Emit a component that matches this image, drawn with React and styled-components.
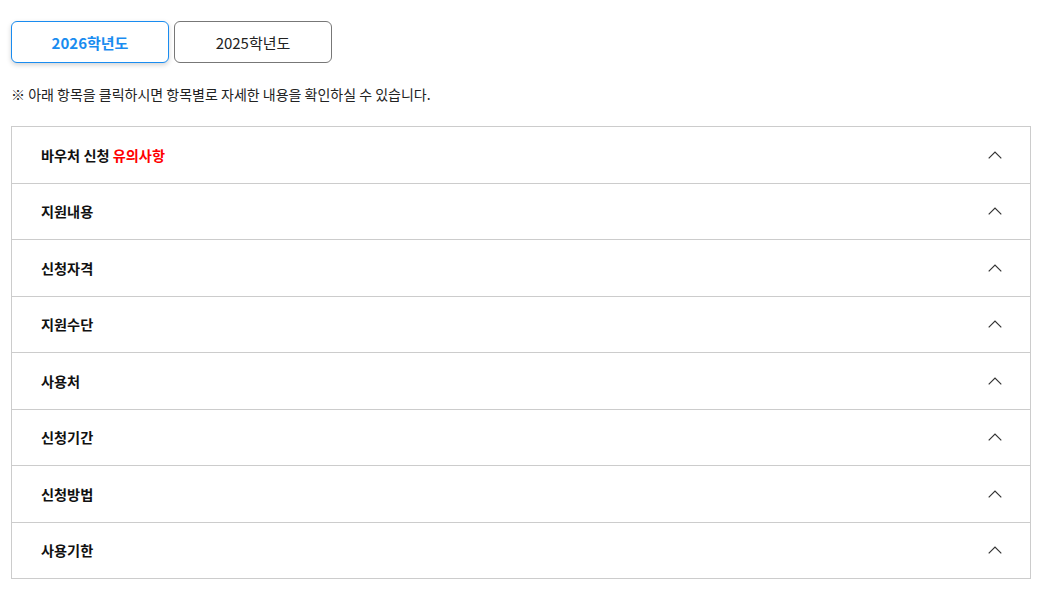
import React, { useState } from 'react';
import styled, { createGlobalStyle } from 'styled-components';

const GlobalStyle = createGlobalStyle`
  body {
    margin: 0;
    background: #fff;
    font-family: "Noto Sans CJK KR", "Noto Sans", sans-serif;
    color: #111;
  }
`;

const years = ['2026학년도', '2025학년도'];

const items = [
  { title: '바우처 신청', accent: '유의사항' },
  { title: '지원내용' },
  { title: '신청자격' },
  { title: '지원수단' },
  { title: '사용처' },
  { title: '신청기간' },
  { title: '신청방법' },
  { title: '사용기한' },
];

function Chevron() {
  return (
    <svg width="14" height="8" viewBox="0 0 14 8" fill="none">
      <path d="M0.7 7.3 L7 1 L13.3 7.3" stroke="#333" strokeWidth="1.2" />
    </svg>
  );
}

function App() {
  const [year, setYear] = useState(0);
  return (
    <Page>
      <GlobalStyle />
      <Tabs>
        {years.map((y, i) => (
          <TabButton key={y} $active={year === i} onClick={() => setYear(i)}>
            {y}
          </TabButton>
        ))}
      </Tabs>
      <Note>※ 아래 항목을 클릭하시면 항목별로 자세한 내용을 확인하실 수 있습니다.</Note>
      <Accordion>
        {items.map((item) => (
          <Row key={item.title}>
            <Title>
              {item.title}
              {item.accent && <Accent> {item.accent}</Accent>}
            </Title>
            <Chevron />
          </Row>
        ))}
      </Accordion>
    </Page>
  );
}

const Page = styled.div`
  padding: 21px 18px 0 11px;
`;

const Tabs = styled.div`
  display: flex;
  gap: 5px;
`;

const TabButton = styled.button`
  width: 158px;
  height: 42px;
  border-radius: 6px;
  background: #fff;
  font-family: "Noto Sans CJK KR", sans-serif;
  font-size: 15px;
  cursor: pointer;
  border: 1px solid ${(p) => (p.$active ? '#1a8cf0' : '#777')};
  color: ${(p) => (p.$active ? '#1a8cf0' : '#222')};
  font-weight: ${(p) => (p.$active ? 700 : 400)};
  box-shadow: ${(p) => (p.$active ? '0 2px 5px rgba(0,0,0,0.18)' : 'none')};
`;

const Note = styled.p`
  margin: 21px 0 0;
  font-size: 14px;
  line-height: 20px;
  color: #222;
`;

const Accordion = styled.div`
  margin-top: 22px;
  width: 1020px;
  box-sizing: border-box;
  border: 1px solid #ccc;
`;

const Row = styled.div`
  display: flex;
  align-items: center;
  justify-content: space-between;
  height: 55.5px;
  padding: 0 28px 0 29px;
  border-bottom: 1px solid #ccc;
  cursor: pointer;

  &:last-child {
    border-bottom: none;
  }
`;

const Title = styled.span`
  font-size: 14.2px;
  font-weight: 700;
  color: #111;
`;

const Accent = styled.span`
  color: #f00;
`;

export default App;
